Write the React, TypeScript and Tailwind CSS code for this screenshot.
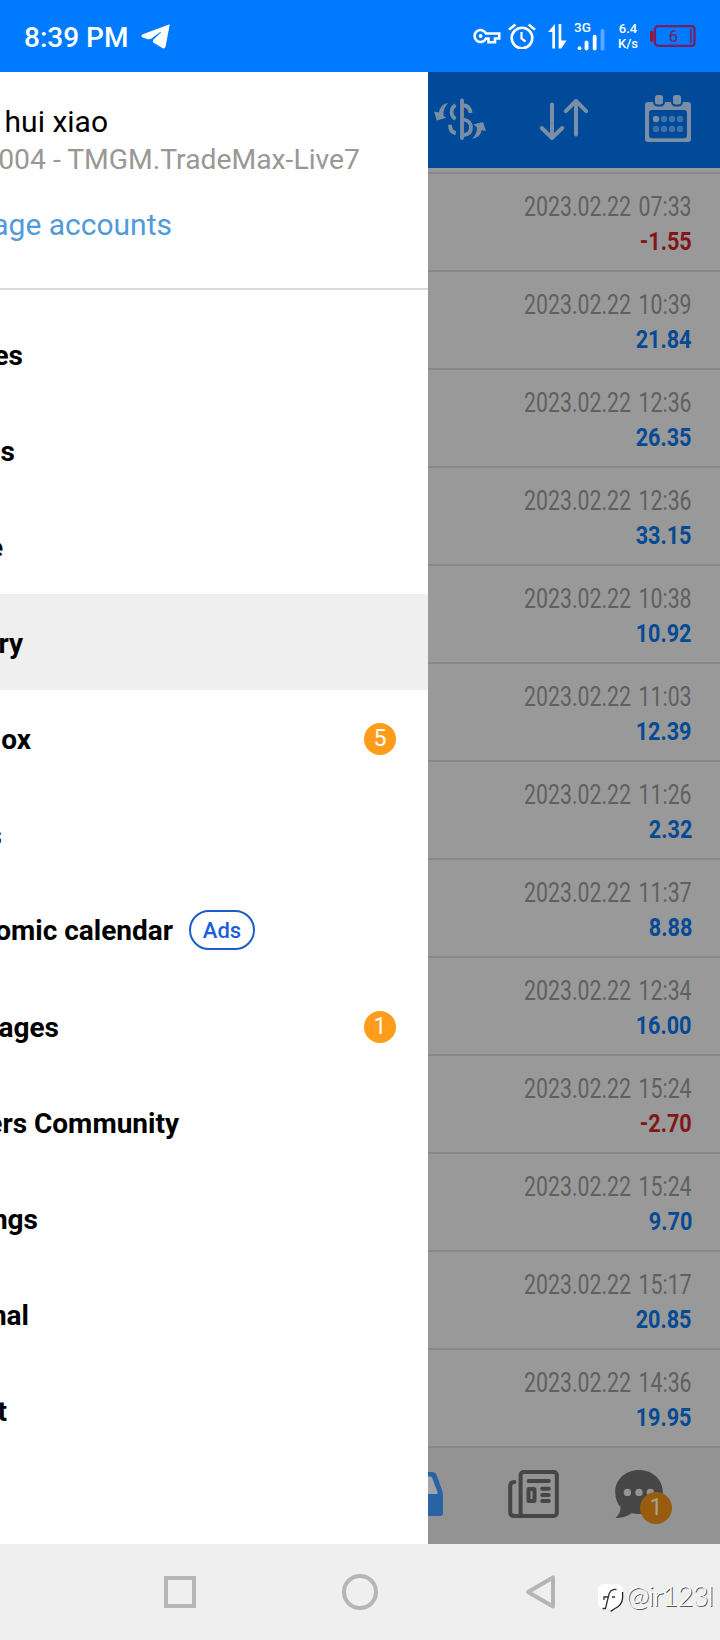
import React from "react";
import clsx from "clsx";

type Deal = {
  time: string;
  profit: string;
};

const deals: Deal[] = [
  { time: "2023.02.22 07:33", profit: "-1.55" },
  { time: "2023.02.22 10:39", profit: "21.84" },
  { time: "2023.02.22 12:36", profit: "26.35" },
  { time: "2023.02.22 12:36", profit: "33.15" },
  { time: "2023.02.22 10:38", profit: "10.92" },
  { time: "2023.02.22 11:03", profit: "12.39" },
  { time: "2023.02.22 11:26", profit: "2.32" },
  { time: "2023.02.22 11:37", profit: "8.88" },
  { time: "2023.02.22 12:34", profit: "16.00" },
  { time: "2023.02.22 15:24", profit: "-2.70" },
  { time: "2023.02.22 15:24", profit: "9.70" },
  { time: "2023.02.22 15:17", profit: "20.85" },
  { time: "2023.02.22 14:36", profit: "19.95" },
];

// The drawer is half swiped out, so every label ends at its own right edge.
const menu = [
  { label: "es", width: "w-[23px]" },
  { label: "s", width: "w-[15px]" },
  { label: "e", width: "w-[3px]" },
  { label: "ry", width: "w-[23px]", active: true },
  { label: "ox", width: "w-[31px]", count: 5 },
  { label: "s", width: "w-[2px]" },
  { label: "omic calendar", width: "w-[173px]", ads: true },
  { label: "ages", width: "w-[59px]", count: 1 },
  { label: "ers Community", width: "w-[179px]" },
  { label: "ngs", width: "w-[38px]" },
  { label: "nal", width: "w-[29px]" },
  { label: "t", width: "w-[7px]" },
];

function StatusBar() {
  return (
    <div className="flex h-[72px] shrink-0 items-center bg-[#007aff] pl-6 text-white">
      <span className="w-[117px] text-[28px] font-medium leading-8 pt-1">8:39 PM</span>
      <svg width="29" height="25" viewBox="0 0 29 25" fill="currentColor">
        <path d="M28 .4 1.2 10.6Q-.8 12 1.6 13.4L7 15.2Q9 15.6 10.5 14.6L19.2 8Q20.6 7.3 19.8 8.6L12.6 15.6Q11 17.6 13 19L21.8 24.3Q24 25.2 24.6 22.6L28.6 1.2Q28.8.2 28 .4Z" />
      </svg>
      <svg className="ml-[303px]" width="28" height="16" viewBox="0 0 28 16" fill="none" stroke="currentColor" strokeWidth="2.6">
        <path d="M13 5.5A6 6 0 1 0 13 10.5H15.5V14.2H22V10.5H26.2V5.5Z" />
        <circle cx="7.6" cy="8" r="1.9" fill="currentColor" stroke="none" />
      </svg>
      <svg className="ml-[7px]" width="28" height="26" viewBox="0 0 28 26" fill="none" stroke="currentColor" strokeWidth="2.6">
        <circle cx="14" cy="15" r="10.3" />
        <path d="M13.5 9V15.5L17.5 18.5" strokeWidth="2.2" />
        <path d="M1 6.8 7.4 1.4M20.6 1.4 27 6.8" />
      </svg>
      <svg className="ml-3" width="19" height="25" viewBox="0 0 19 25" fill="currentColor">
        <path d="M7 0V24.5H4.3V8H0ZM10.6 0H13.3V16.5H18.6L13.3 24.5H10.6Z" />
      </svg>
      <div className="ml-[7px] flex h-[30px] w-[32px] flex-col">
        <span className="h-[10px] text-[13.500px] font-medium leading-[13px]">3G</span>
        <svg className="-mt-[2px] ml-[3px]" width="29" height="23" viewBox="0 0 29 23" fill="currentColor">
          <circle cx="2" cy="20" r="2" />
          <rect x="7.3" y="12" width="4" height="10.5" rx="2" />
          <rect x="15.8" y="6" width="4" height="16.5" rx="2" />
          <rect x="24" y="0" width="4" height="22.5" rx="1.6" opacity=".35" />
        </svg>
      </div>
      <div className="ml-[12px] flex w-[20px] flex-col items-center text-[13px] font-medium leading-[15px]">
        <span>6.4</span>
        <span>K/s</span>
      </div>
      <svg className="ml-[12px]" width="46" height="22" viewBox="0 0 46 22" fill="none" stroke="#7a1d5e" strokeWidth="2.2">
        <rect x="5" y="1.2" width="39.5" height="19.6" rx="3" />
        <path d="M40.8 4V18" stroke="#702a72" strokeWidth="2" />
        <rect x="0" y="6" width="3.6" height="10.5" rx="1" fill="#a01038" stroke="none" />
        <text x="23.5" y="17" fill="#7a1d5e" stroke="none" fontSize="17" textAnchor="middle" fontFamily="Roboto, sans-serif">
          6
        </text>
      </svg>
    </div>
  );
}

function Toolbar() {
  return (
    <div className="flex h-24 shrink-0 items-center bg-[#004a99] pl-1.5 text-[#7a8fa6]">
      <svg width="53" height="48" viewBox="0 0 53 48" fill="none" stroke="currentColor" strokeWidth="3.8">
        <path d="M28 4.5V42" strokeLinecap="round" />
        <path d="M21.6 9.2Q17.6 11 17.6 16T21.6 22.8" />
        <path d="M29.5 9.5Q35.5 9.5 36.6 17" />
        <path d="M29.5 23.5Q37 25 37 31.4 37 38.4 29.5 39" />
        <path d="M16 28.8Q16 36.4 21.8 37" />
        <path d="M14 7Q6.4 8.2 4.8 16.6L0 15.6 2.8 24.4 12.2 21.8 9.4 19.6Q9 12.6 14 7Z" fill="currentColor" stroke="none" />
        <path d="M38.2 43Q46.6 41.4 47.8 34L52 35.2 49 26 39.4 28.6 43 31.4Q43 37.6 38.2 43Z" fill="currentColor" stroke="none" />
      </svg>
      <svg className="ml-[53px]" width="48" height="48" viewBox="0 0 48 48" fill="none" stroke="currentColor" strokeWidth="4" strokeLinecap="round" strokeLinejoin="round">
        <path d="M12 8.5V42M1.8 32 12 42 22.2 32" />
        <path d="M36 38.5V5M25.8 15.2 36 5 46.2 15.2" />
      </svg>
      <svg className="ml-[57px] overflow-visible" width="46" height="48" viewBox="0 0 46 48" fill="currentColor">
        <path fillRule="evenodd" d="M3 6H43Q46 6 46 9V43Q46 46 43 46H3Q0 46 0 43V9Q0 6 3 6ZM7 14Q4 14 4 17V39Q4 42.3 7 42.3H39Q42 42.3 42 39V17Q42 14 39 14Z" />
        <g stroke="#004a99" strokeWidth="2">
          <rect x="9" y="-2" width="10" height="11.5" rx="3.5" />
          <rect x="27" y="-2" width="10" height="11.5" rx="3.5" />
        </g>
        <circle cx="11" cy="23" r="3.2" />
        <g fill="#4070a8">
          <circle cx="19" cy="23" r="3.2" />
          <circle cx="27" cy="23" r="3.2" />
          <circle cx="35" cy="23" r="3.2" />
          <circle cx="11" cy="33" r="3.2" />
          <circle cx="19" cy="33" r="3.2" />
          <circle cx="27" cy="33" r="3.2" />
          <circle cx="35" cy="33" r="3.2" />
        </g>
      </svg>
    </div>
  );
}

function DealRow({ time, profit }: Deal) {
  return (
    <div className="flex h-[98px] flex-col items-end border-t-2 border-[#888888] pr-7 pt-[17px]">
      <span className="origin-right scale-x-[0.788] whitespace-nowrap text-[27px] leading-[33px] text-[#5f6061] [word-spacing:3px]">
        {time}
      </span>
      <span
        className={clsx(
          "origin-right scale-x-[0.815] text-[26.500px] font-bold leading-[34px]",
          profit.startsWith("-") ? "text-[#821719]" : "text-[#054a93]"
        )}
      >
        {profit}
      </span>
    </div>
  );
}

function TabBar() {
  return (
    <div className="flex h-[98px] shrink-0 items-start border-t-2 border-[#888888] bg-[#939393] pt-[22px] text-[#464646]">
      <svg className="mt-0.5" width="15" height="44" viewBox="0 0 15 44">
        <path d="M0 0H4Q7.6 0 8.8 3.4L14 18Q15 21 15 24V41Q15 44 12 44H0Z" fill="#2a63a5" />
        <path d="M0 4.4H2.2Q3.6 4.4 4.2 6L9.4 19.4Q10.2 22 8 22H0Z" fill="#a0a3a7" />
      </svg>
      <svg className="ml-[65px]" width="51" height="48" viewBox="0 0 51 48" fill="none" stroke="currentColor" strokeWidth="4" strokeLinecap="round">
        <rect x="12.6" y="2" width="36.2" height="44" rx="3" />
        <path d="M6.4 12Q2.2 12 2.2 16V42Q2.2 46 6.4 46H14" />
        <path d="M20.6 11H40.8M34.2 18.8H40.8M34.2 25H40.8M34.2 31H40.8" />
        <rect x="20.5" y="19" width="6" height="12" rx="0.5" />
      </svg>
      <div className="relative ml-14">
        <svg width="48" height="48" viewBox="0 0 48 48" fill="currentColor">
          <path d="M24 0C37.5 0 47.8 9.6 47.8 22S37.5 44 24 44Q20 44 16.6 43.2 8.5 48.4.4 48 5.6 43.6 5.6 37.2C2 33 .2 28 .2 22 .2 9.6 10.5 0 24 0Z" />
          <g fill="#939393">
            <circle cx="12.4" cy="22.4" r="3.7" />
            <circle cx="24" cy="22.4" r="3.7" />
            <circle cx="35.4" cy="22.4" r="3.7" />
          </g>
        </svg>
        <span className="absolute left-[25px] top-[22px] flex size-8 items-center justify-center rounded-full bg-[#995c0e] text-[23px] leading-8 text-[#a8a096]">
          1
        </span>
      </div>
    </div>
  );
}

function Drawer() {
  return (
    <div className="flex w-[428px] shrink-0 flex-col overflow-hidden bg-white">
      <div className="flex h-[218px] shrink-0 flex-col border-b-2 border-[#d9d9d9] pt-[31px]">
        <div className="flex w-[108px] justify-end whitespace-nowrap text-[30px] leading-[38px] text-black">hui xiao</div>
        <div className="flex w-[360px] justify-end whitespace-nowrap text-[28.300px] leading-[38px] text-[#9a9795]">
          004 - TMGM.TradeMax-Live7
        </div>
        <div className="mt-[27px] flex w-[172px] justify-end whitespace-nowrap text-[30px] leading-[38px] text-[#519adc]">
          age accounts
        </div>
      </div>
      <div className="mt-4 flex flex-col">
        {menu.map((item, i) => (
          <div key={i} className={clsx("flex h-24 items-center pr-8", item.active && "bg-[#efefef]")}>
            <span
              className={clsx(
                "flex shrink-0 justify-end whitespace-nowrap text-[28px] font-bold leading-8 text-black",
                item.ads ? "pt-0.5" : "pt-1",
                item.width
              )}
            >
              {item.label}
            </span>
            {item.ads && (
              <span className="ml-4 flex h-10 w-[66px] items-center justify-center rounded-[20px] border-2 border-[#1c5cc8] text-[22px] font-medium text-[#1c5fd8]">
                Ads
              </span>
            )}
            {item.count && (
              <span className="ml-auto mt-0.5 flex size-8 items-center justify-center rounded-full bg-[#ff9c1a] text-[23px] leading-8 text-white">
                {item.count}
              </span>
            )}
          </div>
        ))}
      </div>
    </div>
  );
}

function NavBar() {
  return (
    <div className="flex h-24 shrink-0 items-center bg-[#efefef] pl-[164px]">
      <div className="size-8 border-4 border-[#b5b5b5]" />
      <div className="ml-[146px] size-9 rounded-full border-4 border-[#b5b5b5]" />
      <svg className="ml-[147px]" width="30" height="36" viewBox="0 0 30 36" fill="none" stroke="#b5b5b5" strokeWidth="4">
        <path d="M28 3.4V32.6L3 18Z" strokeLinejoin="round" />
      </svg>
      <svg className="ml-[43px] mt-3" width="28" height="29" viewBox="0 0 28 29" fill="none">
        <path d="M6 0H19Q25 0 25 6V13Q25 23 13 28L12 25H6Q0 25 0 18V6Q0 0 6 0Z" fill="#fff" />
        <path d="M24.6 8V14Q24 21.5 17 24.5L12.6 27.4" stroke="#222" strokeWidth="1.3" />
        <path d="M4.5 24.5H7.5L10.5 12Q12 4.5 18.5 5.5M6 16V13H11M14 13H17" stroke="#333" strokeWidth="1.3" />
      </svg>
      <span className="mt-1.5 whitespace-nowrap font-[Lato,sans-serif] text-[28px] font-light leading-9 tracking-[-1.1px] text-white [text-shadow:1px_1px_0_#555]">
        @ir123l
      </span>
    </div>
  );
}

export default function App() {
  return (
    <div className="flex h-[1640px] w-[720px] flex-col overflow-hidden bg-[#efefef] font-[Roboto,sans-serif]">
      <StatusBar />
      <div className="flex h-[1472px] shrink-0">
        <Drawer />
        <div className="flex min-w-0 flex-1 flex-col bg-[#999999]">
          <Toolbar />
          <div className="flex flex-1 flex-col pt-1">
            {deals.map((deal, i) => (
              <DealRow key={i} {...deal} />
            ))}
          </div>
          <TabBar />
        </div>
      </div>
      <NavBar />
    </div>
  );
}
